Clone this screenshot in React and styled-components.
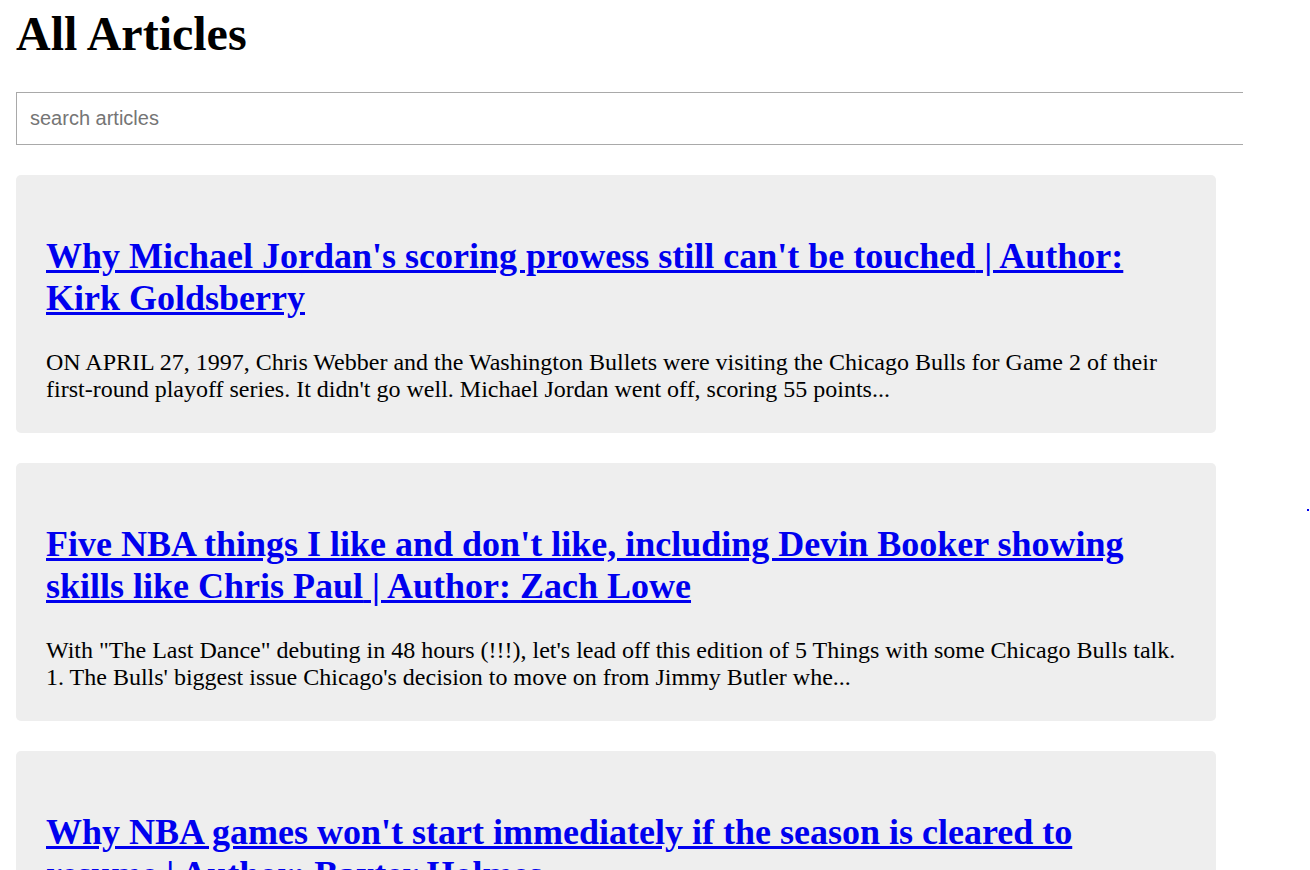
import React from "react";
import styled, { createGlobalStyle } from "styled-components";

const GlobalStyle = createGlobalStyle`
  body {
    margin: 0;
    background: #fff;
    font-family: "Liberation Serif", "Times New Roman", serif;
    color: #000;
  }
`;

const Page = styled.main`
  position: relative;
  padding: 6px 16px 30px;
`;

const Title = styled.h1`
  font-size: 48px;
  font-weight: bold;
  margin: 0 0 31px;
`;

const SearchInput = styled.input`
  display: block;
  box-sizing: border-box;
  width: 1227px;
  height: 53px;
  margin: 0 0 30px;
  padding: 14px 13px;
  border: 1px solid #a9a9a9;
  border-right: none;
  outline: none;
  font-family: "Liberation Sans", Arial, sans-serif;
  font-size: 20px;
  color: #000;
  &::placeholder {
    color: #757575;
  }
`;

const List = styled.div`
  display: flex;
  flex-direction: column;
  gap: 30px;
`;

const Card = styled.article`
  width: 1200px;
  box-sizing: border-box;
  padding: 30px;
  background: #eee;
  border-radius: 5px;
`;

const CardTitle = styled.h2`
  font-size: 36px;
  font-weight: bold;
  margin: 30px 0;
  a {
    color: #0000ee;
    text-decoration: underline;
  }
`;

const Excerpt = styled.p`
  font-size: 24px;
  margin: 0;
`;

const Dot = styled.span`
  position: absolute;
  left: 1307px;
  top: 509px;
  width: 2px;
  height: 2px;
  background: #0000ee;
`;

const articles = [
  {
    title: "Why Michael Jordan's scoring prowess still can't be touched",
    author: "Kirk Goldsberry",
    excerpt:
      "ON APRIL 27, 1997, Chris Webber and the Washington Bullets were visiting the Chicago Bulls for Game 2 of their first-round playoff series. It didn't go well. Michael Jordan went off, scoring 55 points...",
  },
  {
    title:
      "Five NBA things I like and don't like, including Devin Booker showing skills like Chris Paul",
    author: "Zach Lowe",
    excerpt:
      "With \"The Last Dance\" debuting in 48 hours (!!!), let's lead off this edition of 5 Things with some Chicago Bulls talk. 1. The Bulls' biggest issue Chicago's decision to move on from Jimmy Butler whe...",
  },
  {
    title:
      "Why NBA games won't start immediately if the season is cleared to resume",
    author: "Baxter Holmes",
    excerpt:
      "If the NBA season is cleared to resume, teams will need time to get players back into game shape before any games are played, according to league executives and team staffers...",
  },
];

function App() {
  return (
    <>
      <GlobalStyle />
      <Page>
        <Title>All Articles</Title>
        <SearchInput type="text" placeholder="search articles" />
        <List>
          {articles.map((a) => (
            <Card key={a.title}>
              <CardTitle>
                <a href="#">
                  {a.title} | Author: {a.author}
                </a>
              </CardTitle>
              <Excerpt>{a.excerpt}</Excerpt>
            </Card>
          ))}
        </List>
        <Dot />
      </Page>
    </>
  );
}

export default App;
